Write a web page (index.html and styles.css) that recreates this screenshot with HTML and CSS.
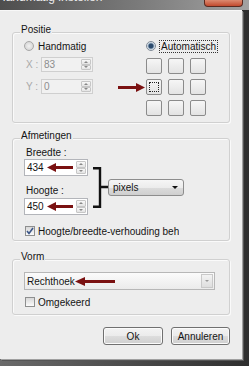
FILE: index.html
```html
<!DOCTYPE html>
<html lang="nl">
<head>
  <meta charset="UTF-8" />
  <meta name="viewport" content="width=device-width, initial-scale=1.0" />
  <title>Handmatig instellen</title>
  <link rel="stylesheet" href="styles.css">
</head>

<body>
  <div class="window">
    <div class="titlebar">
      <span class="title">Handmatig instellen</span>
      <span class="close"></span>
    </div>

    <div class="frame">
      <div class="client">

        <div class="group positie">
          <div class="group-title">Positie</div>
          <div class="positie-body">
            <div class="col-left">
              <div class="radio-row">
                <span class="radio"></span>
                <span>Handmatig</span>
              </div>
              <div class="coord">
                <span class="coord-label">X :</span>
                <div class="field disabled">
                  <span class="val">83</span>
                  <span class="spin"><span class="spin-btn up"></span><span class="spin-btn down"></span></span>
                </div>
              </div>
              <div class="coord coord-y">
                <span class="coord-label">Y :</span>
                <div class="field disabled">
                  <span class="val">0</span>
                  <span class="spin"><span class="spin-btn up"></span><span class="spin-btn down"></span></span>
                </div>
              </div>
            </div>

            <div class="col-right">
              <div class="radio-row">
                <span class="radio checked"></span>
                <span class="focus">Automatisch</span>
              </div>
              <div class="anchor-grid">
                <svg class="arrow arrow-right" width="27" height="9" viewBox="0 0 27 9">
                  <rect x="0" y="3" width="19" height="3" fill="#7a1111" />
                  <polygon points="27,4.5 18,0 18,9" fill="#7a1111" />
                </svg>
                <span class="cell"></span>
                <span class="cell"></span>
                <span class="cell"></span>
                <span class="cell focus-cell"></span>
                <span class="cell"></span>
                <span class="cell"></span>
                <span class="cell"></span>
                <span class="cell"></span>
                <span class="cell"></span>
              </div>
            </div>
          </div>
        </div>

        <div class="group afmetingen">
          <div class="group-title">Afmetingen</div>
          <div class="afm-body">
            <div class="fields">
              <div class="field-label">Breedte :</div>
              <div class="field num">
                <span class="val">434</span>
                <svg class="arrow" width="26" height="9" viewBox="0 0 26 9">
                  <polygon points="0,4.5 9,0 9,9" fill="#7a1111" />
                  <rect x="8" y="3" width="18" height="3" fill="#7a1111" />
                </svg>
                <span class="spin"><span class="spin-btn up"></span><span class="spin-btn down"></span></span>
              </div>
              <div class="field-label second">Hoogte :</div>
              <div class="field num next">
                <span class="val">450</span>
                <svg class="arrow" width="26" height="9" viewBox="0 0 26 9">
                  <polygon points="0,4.5 9,0 9,9" fill="#7a1111" />
                  <rect x="8" y="3" width="18" height="3" fill="#7a1111" />
                </svg>
                <span class="spin"><span class="spin-btn up"></span><span class="spin-btn down"></span></span>
              </div>
            </div>

            <svg class="bracket" width="15" height="41" viewBox="0 0 15 41">
              <path d="M0 1.2 H7 V39.8 H0 M7 20 H15" stroke="#111" stroke-width="2.4" fill="none" />
            </svg>

            <div class="select">pixels</div>
          </div>

          <div class="check">
            <span class="box">
              <svg width="8" height="8" viewBox="0 0 8 8">
                <path d="M1 4 L3 6.5 L7 1" stroke="#3b5688" stroke-width="1.6" fill="none" />
              </svg>
            </span>
            <span>Hoogte/breedte-verhouding behouden</span>
          </div>
        </div>

        <div class="group vorm">
          <div class="group-title">Vorm</div>
          <div class="combo">
            <span class="val">Rechthoek</span>
            <svg class="arrow" width="40" height="9" viewBox="0 0 40 9">
              <polygon points="0,4.5 10,0 10,9" fill="#7a1111" />
              <rect x="9" y="3" width="31" height="3" fill="#7a1111" />
            </svg>
            <span class="combo-btn"></span>
          </div>
          <div class="check">
            <span class="box"></span>
            <span>Omgekeerd</span>
          </div>
        </div>

        <div class="buttons">
          <button class="btn btn-ok">Ok</button>
          <button class="btn btn-cancel">Annuleren</button>
        </div>

      </div>
    </div>
  </div>
</body>
</html>
```

FILE: styles.css
```css
body {
  margin: 0;
  font-family: 'Liberation Sans', Arial, sans-serif;
  font-size: 10px;
  color: #141414;
  background: #3a3a3a;
}

.window {
  width: 249px;
  height: 366px;
  display: flex;
  flex-direction: column;
}

.titlebar {
  height: 10px;
  flex: none;
  display: flex;
  overflow: hidden;
  background: linear-gradient(to right, #4e4e4e, #7a7a7a 55%, #a2a2a2);
}

.title {
  color: #ececec;
  font-size: 12px;
  line-height: 14px;
  margin: -10px 0 0 -3px;
}

.close {
  margin-left: auto;
  margin-right: 6px;
  width: 37px;
  height: 6px;
  background: linear-gradient(#dc8a70, #c24a2e);
  border: 1px solid #5a2a20;
  border-top: none;
  border-radius: 0 0 4px 4px;
}

.frame {
  flex: 1;
  display: flex;
  padding: 0 7px 7px 0;
  background: linear-gradient(to right, #6a6a6a, #2e2e2e);
}

.client {
  flex: 1;
  background: #ededed;
  padding: 21px 12px 0;
  border-top: 1px solid #f8f8f8;
  box-shadow: 1px 1px 0 #a0a0a0, 2px 2px 0 #555;
}

/* group boxes */

.group {
  border: 1px solid #d0d0d0;
  border-radius: 3px;
  padding-left: 11px;
  box-shadow: inset 1px 1px 0 #fafafa, 1px 1px 0 #fafafa;
}

.group-title {
  display: table;
  margin: -10px 0 0 -4px;
  padding: 0 1px;
  line-height: 14px;
  background: #ededed;
}

.positie {
  padding-bottom: 6px;
}

.afmetingen {
  margin-top: 15px;
  padding-bottom: 2px;
}

.vorm {
  margin-top: 18px;
  padding-bottom: 5px;
}

/* positie */

.positie-body {
  display: grid;
  grid-template-columns: 122px auto;
  margin-top: 2px;
}

.radio-row {
  display: flex;
  align-items: center;
  gap: 4px;
  height: 14px;
}

.radio {
  width: 10px;
  height: 10px;
  box-sizing: border-box;
  border-radius: 50%;
  border: 1px solid #a8a8a8;
  background: radial-gradient(circle, #f2f2f2, #cdcdcd);
}

.radio.checked {
  border-color: #7f8a96;
  background: radial-gradient(circle, #2b4a6c 0 2px, #9fb3c8 3px, #eef2f5 4px);
}

.focus {
  outline: 1px dotted #333;
  padding: 0 1px;
}

.coord {
  display: flex;
  align-items: center;
  margin-top: 4px;
}

.coord-y {
  margin-top: 7px;
}

.coord-label {
  width: 15px;
  padding-left: 2px;
  color: #a9a9a9;
}

.field {
  display: flex;
  align-items: center;
  box-sizing: border-box;
  border: 1px solid #b3b5ba;
  background: #fff;
}

.field.disabled {
  width: 52px;
  height: 15px;
  background: #f1f1f1;
  border-color: #cfcfcf;
  color: #8d8d8d;
}

.val {
  padding-left: 2px;
}

.spin {
  margin-left: auto;
  margin-right: 1px;
  width: 10px;
  height: 100%;
  padding: 1px 0;
  box-sizing: border-box;
  display: flex;
  flex-direction: column;
}

.spin-btn {
  flex: 1;
  display: flex;
  align-items: center;
  justify-content: center;
  border: 1px solid #c6c6c6;
  border-radius: 1px;
  background: linear-gradient(#f8f8f8, #e3e3e3);
}

.spin-btn.up::after {
  content: "";
  border: 2px solid transparent;
  border-top: 0;
  border-bottom-color: #888;
}

.spin-btn.down::after {
  content: "";
  border: 2px solid transparent;
  border-bottom: 0;
  border-top-color: #888;
}

.anchor-grid {
  position: relative;
  display: grid;
  grid-template-columns: repeat(3, 16px);
  grid-auto-rows: 16px;
  column-gap: 6px;
  row-gap: 5px;
  margin-top: 5px;
}

.cell {
  box-sizing: border-box;
  border: 1px solid #8b8b8b;
  border-radius: 2px;
  background: linear-gradient(#f6f6f6, #e3e3e3);
}

.focus-cell {
  outline: 1px dotted #222;
  outline-offset: -4px;
}

.arrow {
  flex: none;
  display: block;
}

.arrow-right {
  position: absolute;
  right: calc(100% + 1px);
  top: 25px;
}

/* afmetingen */

.afm-body {
  display: flex;
  margin-top: 3px;
}

.fields {
  width: 64px;
  display: flex;
  flex-direction: column;
}

.field-label {
  line-height: 13px;
  padding-left: 2px;
}

.field-label.second {
  margin-top: 8px;
}

.field.num {
  height: 17px;
}

.field.next {
  margin-top: 1px;
}

.field.num .val {
  width: 20px;
}

.bracket {
  margin: 21px 0 0 5px;
}

.select {
  margin-top: 33px;
  width: 76px;
  height: 17px;
  box-sizing: border-box;
  display: flex;
  align-items: center;
  padding-left: 4px;
  border: 1px solid #8d8d8d;
  border-radius: 3px;
  background: linear-gradient(#f6f6f6 0, #ececec 50%, #dcdcdc 50%, #cfcfcf 100%);
}

.select::after {
  content: "";
  margin-left: auto;
  margin-right: 5px;
  border: 3px solid transparent;
  border-bottom: 0;
  border-top-color: #111;
}

.check {
  display: flex;
  align-items: center;
  gap: 3px;
  height: 14px;
  width: 154px;
  margin: 9px 0 0 1px;
  white-space: nowrap;
  overflow: hidden;
}

.box {
  flex: none;
  width: 10px;
  height: 10px;
  box-sizing: border-box;
  display: flex;
  align-items: center;
  justify-content: center;
  border: 1px solid #8e8f8f;
  background: linear-gradient(#d8d8d8, #fbfbfb);
}

/* vorm */

.combo {
  margin-top: 8px;
  width: 191px;
  height: 18px;
  box-sizing: border-box;
  display: flex;
  align-items: center;
  border: 1px solid #b7b7b7;
  background: linear-gradient(#fbfbfb, #ebebeb);
}

.combo .val {
  width: 48px;
  padding-left: 2px;
}

.combo-btn {
  margin-left: auto;
  margin-right: 1px;
  width: 12px;
  height: 14px;
  box-sizing: border-box;
  display: flex;
  align-items: center;
  justify-content: center;
  border: 1px solid #c9c9c9;
  background: linear-gradient(#f3f3f3, #dedede);
}

.combo-btn::after {
  content: "";
  border: 2px solid transparent;
  border-bottom: 0;
  border-top-color: #999;
}

.vorm .check {
  margin-top: 5px;
}

/* buttons */

.buttons {
  display: flex;
  justify-content: flex-end;
  gap: 8px;
  margin-top: 12px;
}

.btn {
  height: 18px;
  padding: 0;
  font: inherit;
  color: #141414;
  border: 1px solid #707070;
  border-radius: 3px;
  background: linear-gradient(#f3f3f3 0, #ebebeb 50%, #dddddd 50%, #cfcfcf 100%);
  box-shadow: inset 0 0 0 1px #fbfbfb;
}

.btn-ok {
  width: 60px;
}

.btn-cancel {
  width: 59px;
}
```
